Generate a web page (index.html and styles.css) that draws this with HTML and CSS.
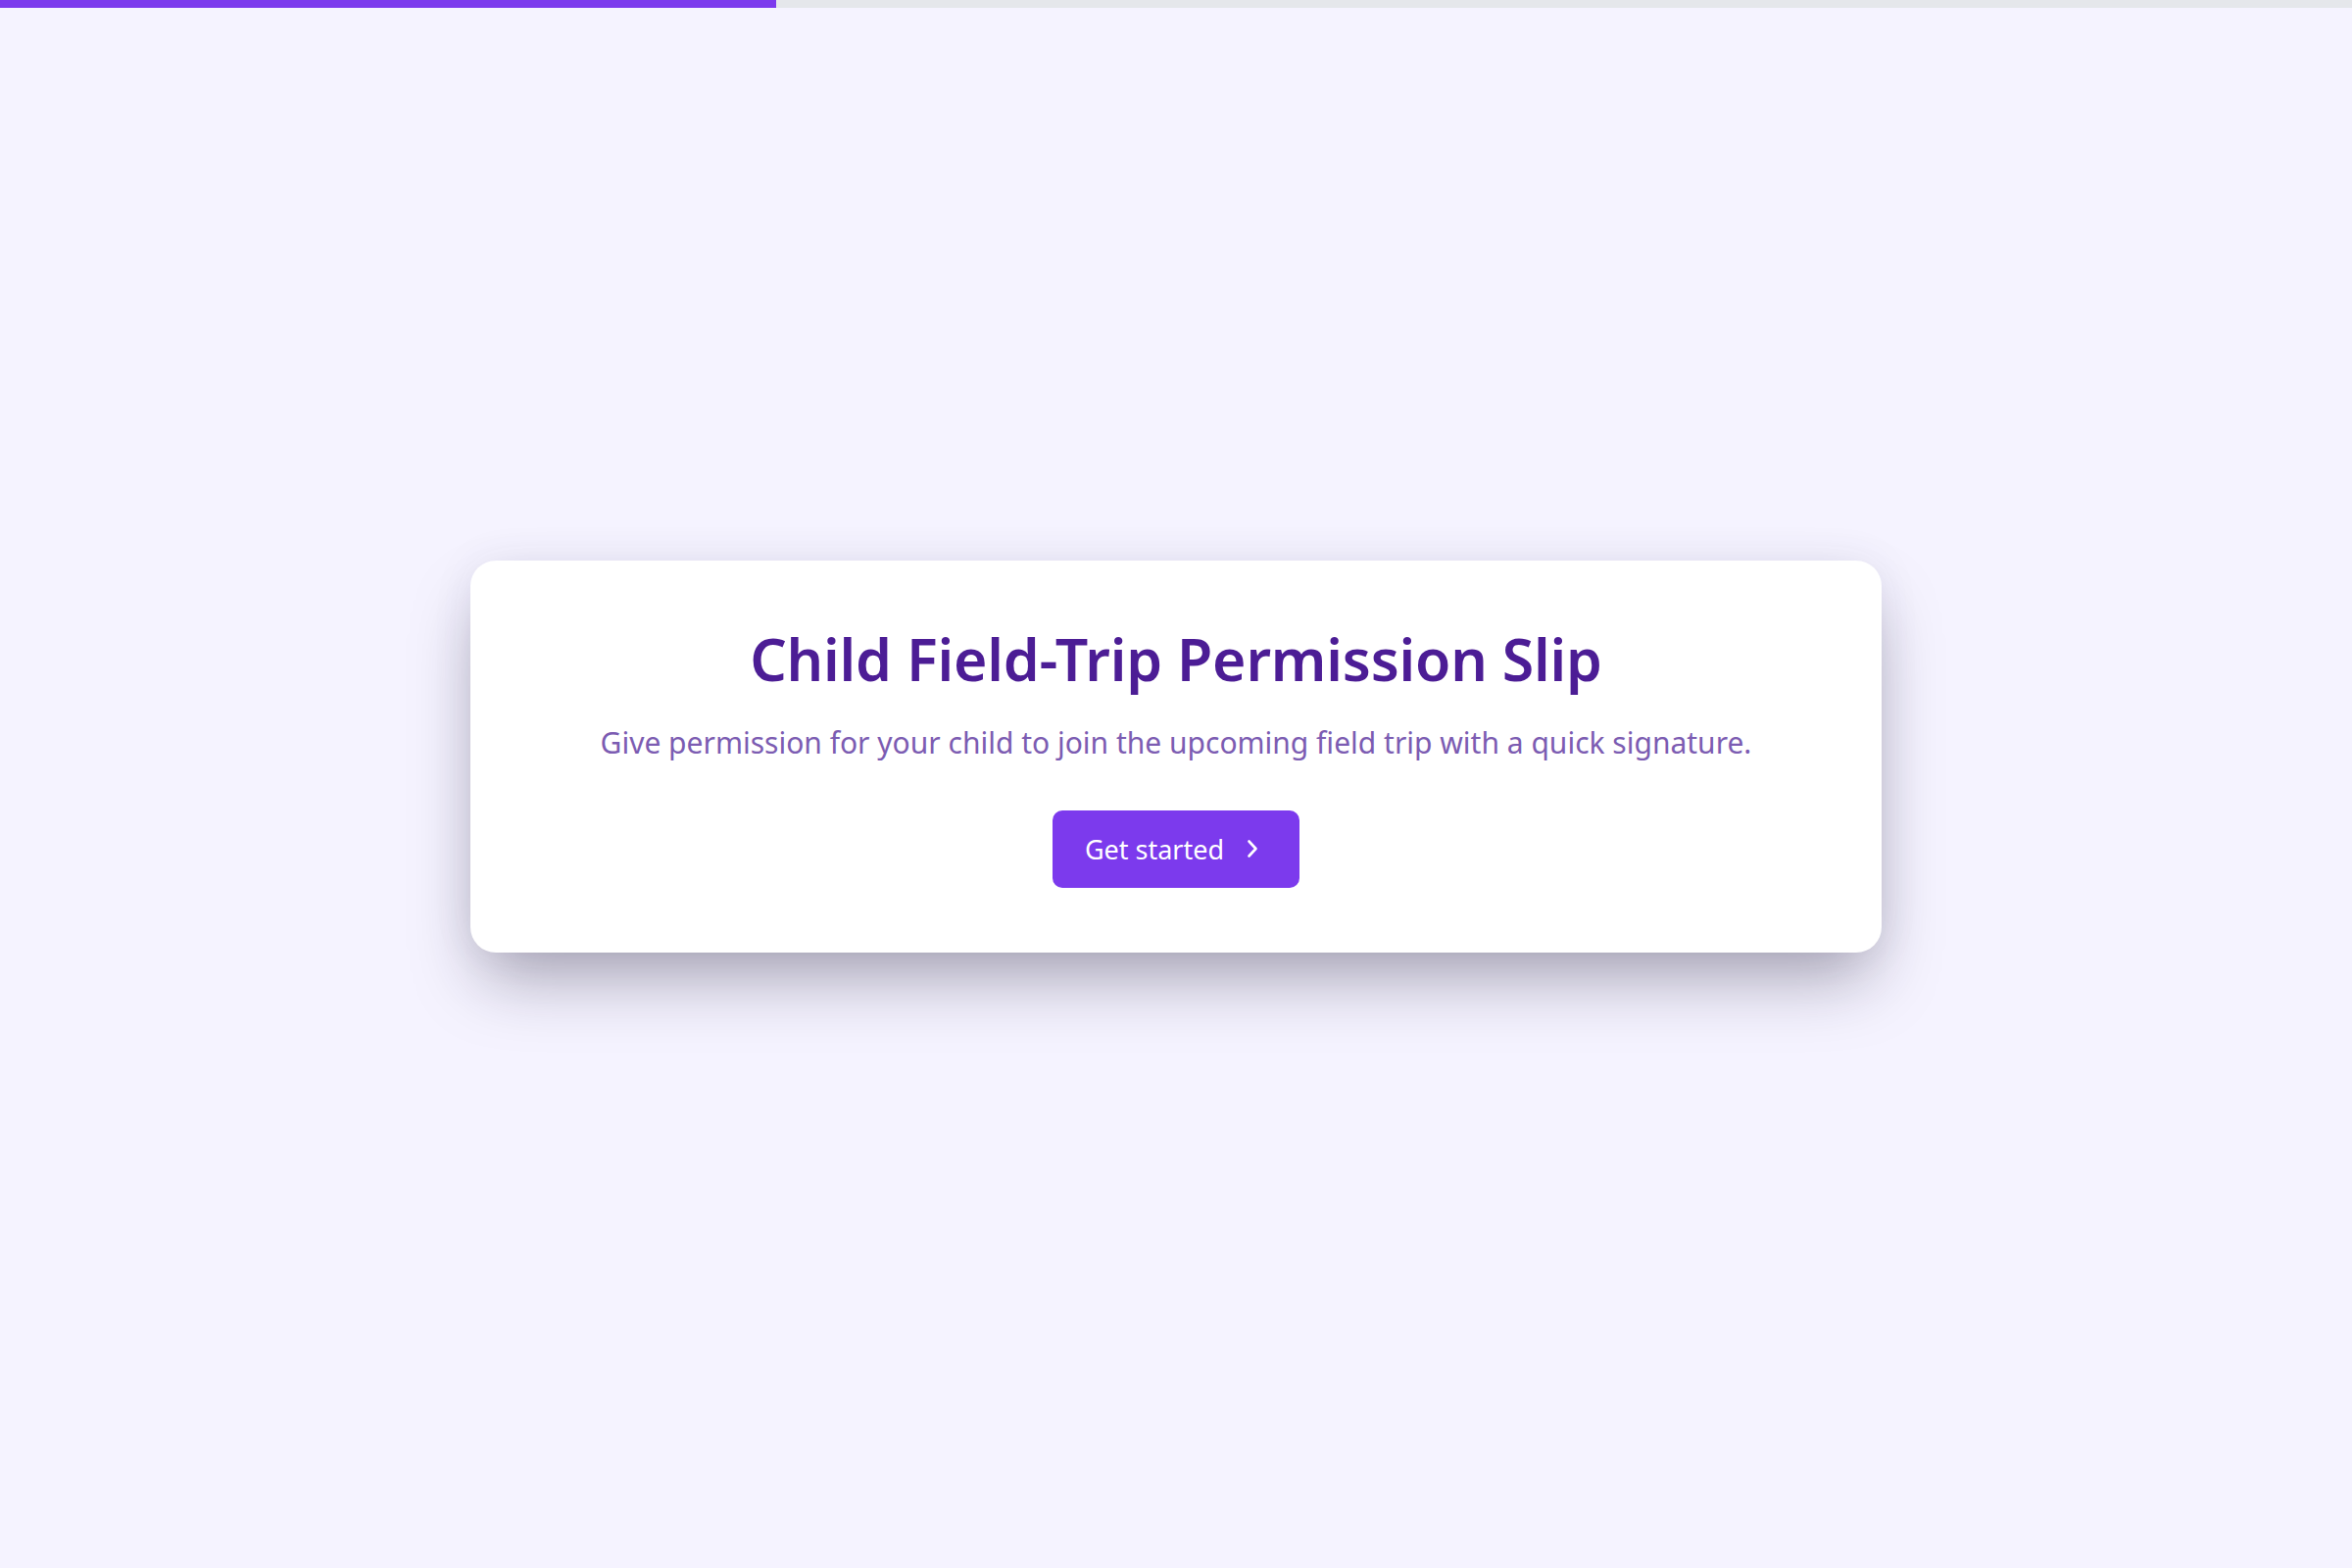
FILE: index.html
```html
<!DOCTYPE html>
<html lang="en">
<head>
<meta charset="utf-8">
<title>Child Field-Trip Permission Slip</title>
<link rel="stylesheet" href="styles.css">
</head>
<body>
<div class="progress"><div class="progress-fill" style="width: 33%"></div></div>
<main class="stage">
  <section class="card">
    <h1 class="title">Child Field-Trip Permission Slip</h1>
    <p class="subtitle">Give permission for your child to join the upcoming field trip with a quick signature.</p>
    <button class="cta" type="button">
      <span>Get started</span>
      <svg class="chev" viewBox="0 0 14 22" width="14" height="22" aria-hidden="true"><path d="M3.5 3.5 L10.5 11 L3.5 18.5" fill="none" stroke="#fff" stroke-width="2.6" stroke-linecap="round" stroke-linejoin="round"/></svg>
    </button>
  </section>
</main>
</body>
</html>
```
FILE: styles.css
```css
* { box-sizing: border-box; }
html, body { margin: 0; padding: 0; }
body {
  background: #f5f3ff;
  font-family: "Noto Sans", "Open Sans", sans-serif;
  min-height: 1600px;
}
.progress {
  height: 8px;
  background: #e5e7eb;
}
.progress-fill {
  height: 100%;
  background: #7c3aed;
}
.stage {
  min-height: 1592px;
  display: flex;
  align-items: center;
  justify-content: center;
  padding-bottom: 65px;
}
.card {
  width: 1440px;
  background: #ffffff;
  border-radius: 26px;
  box-shadow: 0 36px 70px -12px rgba(25, 20, 45, 0.36), 0 0 44px rgba(60, 50, 110, 0.07);
  padding: 62px 40px 66px;
  display: flex;
  flex-direction: column;
  align-items: center;
  text-align: center;
}
.title {
  margin: 0;
  font-size: 59px;
  line-height: 76px;
  font-weight: 600;
  color: #4c1d95;
  letter-spacing: -0.2px;
}
.subtitle {
  margin: 28px 0 0;
  font-size: 30px;
  line-height: 40px;
  color: #7c5cb2;
}
.cta {
  margin-top: 49px;
  height: 79px;
  width: 252px;
  border: none;
  border-radius: 10px;
  background: #7c3aed;
  color: #ffffff;
  font-family: inherit;
  font-size: 27px;
  display: flex;
  align-items: center;
  justify-content: center;
  gap: 22px;
  padding: 0 8px 0 0;
}
.chev { display: block; }
```
